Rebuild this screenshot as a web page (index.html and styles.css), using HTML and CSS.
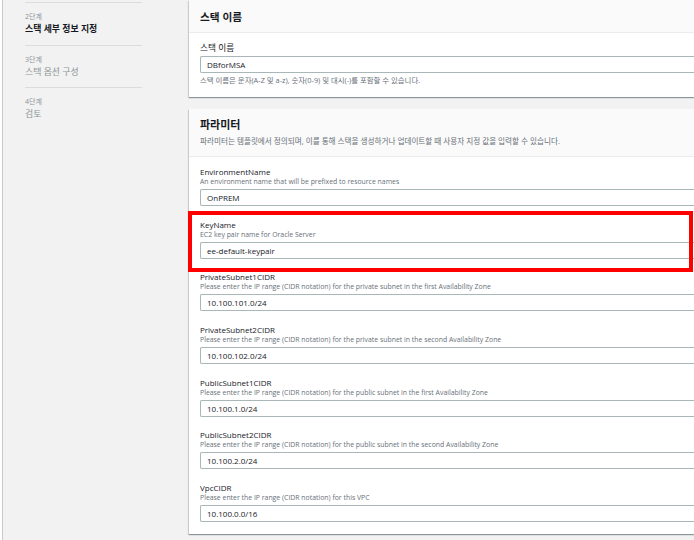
FILE: index.html
```html
<!DOCTYPE html>
<html lang="ko">
<head>
<meta charset="utf-8">
<link rel="stylesheet" href="styles.css">
</head>
<body>
<div class="page">
  <aside class="sidebar">
    <div class="step">
      <div class="step-num">2단계</div>
      <div class="step-title active">스택 세부 정보 지정</div>
    </div>
    <div class="step">
      <div class="step-num">3단계</div>
      <div class="step-title">스택 옵션 구성</div>
    </div>
    <div class="step">
      <div class="step-num">4단계</div>
      <div class="step-title">검토</div>
    </div>
  </aside>
  <main class="main">
    <section class="card">
      <div class="card-header first">
        <h2 class="card-title">스택 이름</h2>
      </div>
      <div class="card-body first-body">
        <div class="label ko">스택 이름</div>
        <div class="input">DBforMSA</div>
        <div class="help">스택 이름은 문자(A-Z 및 a-z), 숫자(0-9) 및 대시(-)를 포함할 수 있습니다.</div>
      </div>
    </section>
    <section class="card params">
      <div class="card-header">
        <h2 class="card-title big">파라미터</h2>
        <div class="card-desc">파라미터는 템플릿에서 정의되며, 이를 통해 스택을 생성하거나 업데이트할 때 사용자 지정 값을 입력할 수 있습니다.</div>
      </div>
      <div class="card-body fields">
        <div class="field">
          <div class="label">EnvironmentName</div>
          <div class="desc">An environment name that will be prefixed to resource names</div>
          <div class="input">OnPREM</div>
        </div>
        <div class="field">
          <div class="label">KeyName</div>
          <div class="desc">EC2 key pair name for Oracle Server</div>
          <div class="input">ee-default-keypair</div>
        </div>
        <div class="field">
          <div class="label">PrivateSubnet1CIDR</div>
          <div class="desc">Please enter the IP range (CIDR notation) for the private subnet in the first Availability Zone</div>
          <div class="input">10.100.101.0/24</div>
        </div>
        <div class="field">
          <div class="label">PrivateSubnet2CIDR</div>
          <div class="desc">Please enter the IP range (CIDR notation) for the private subnet in the second Availability Zone</div>
          <div class="input">10.100.102.0/24</div>
        </div>
        <div class="field">
          <div class="label">PublicSubnet1CIDR</div>
          <div class="desc">Please enter the IP range (CIDR notation) for the public subnet in the first Availability Zone</div>
          <div class="input">10.100.1.0/24</div>
        </div>
        <div class="field">
          <div class="label">PublicSubnet2CIDR</div>
          <div class="desc">Please enter the IP range (CIDR notation) for the public subnet in the second Availability Zone</div>
          <div class="input">10.100.2.0/24</div>
        </div>
        <div class="field">
          <div class="label">VpcCIDR</div>
          <div class="desc">Please enter the IP range (CIDR notation) for this VPC</div>
          <div class="input">10.100.0.0/16</div>
        </div>
      </div>
    </section>
  </main>
</div>
<div class="highlight"></div>
</body>
</html>
```

FILE: styles.css
```css
html, body {
  margin: 0;
  padding: 0;
  background: #ffffff;
}
body {
  width: 694px;
  height: 540px;
  overflow: hidden;
  position: relative;
  font-family: "Open Sans", "Noto Sans CJK KR", sans-serif;
  color: #16191f;
}
.page {
  display: flex;
  height: 540px;
  padding-left: 2px;
}
.sidebar {
  width: 185px;
  flex: none;
  background: #f2f2f2;
  border-left: 1px solid #c9c9c9;
  padding-top: 2px;
}
.step {
  margin-left: 22px;
  width: 117px;
  border-top: 1px solid #dcdcdc;
  padding: 9px 0 9.5px;
}
.step-num {
  font-size: 7px;
  line-height: 10px;
  color: #8a939c;
}
.step-title {
  margin-top: 1px;
  font-size: 8.9px;
  line-height: 12px;
  color: #8d9696;
}
.step-title.active {
  color: #16191f;
  font-weight: 700;
}
.main {
  flex: 1;
  background: #f2f2f2;
  padding-left: 1px;
  min-width: 0;
}
.card {
  background: #ffffff;
  box-shadow: 0 1px 1px 0 rgba(0, 28, 36, 0.35), -1px 1px 1px 0 rgba(0, 28, 36, 0.12);
}
.card.params {
  margin-top: 12px;
}
.card-header {
  background: #fafafa;
  border-bottom: 1px solid #eaeded;
  padding: 9px 0 10px 11px;
}
.card-header.first {
  padding: 10px 0 8px 11px;
}
.card-title {
  margin: 0;
  font-size: 10.7px;
  line-height: 14px;
  font-weight: 700;
  color: #16191f;
}
.card-title.big {
  font-size: 11px;
}
.card-desc {
  margin-top: 4px;
  font-size: 7.6px;
  line-height: 10px;
  color: #687078;
}
.card-body {
  padding: 10px 0 12px 11px;
}
.label {
  font-size: 8px;
  line-height: 10px;
  color: #16191f;
}
.label.ko {
  font-size: 8.7px;
}
.first-body .input {
  margin-top: 3px;
}
.help {
  margin-top: 3px;
  font-size: 7.4px;
  line-height: 9px;
  color: #687078;
}
.desc {
  font-size: 6.9px;
  line-height: 10px;
  color: #687078;
}
.input {
  box-sizing: border-box;
  height: 17px;
  border: 1px solid #aab7b8;
  border-right: none;
  border-radius: 2px 0 0 2px;
  padding-left: 6px;
  font-size: 8px;
  line-height: 15px;
  color: #16191f;
}
.fields {
  display: flex;
  flex-direction: column;
  gap: 13.67px;
}
.field .input {
  margin-top: 2px;
}
.highlight {
  position: absolute;
  left: 188px;
  top: 211px;
  width: 505px;
  height: 61px;
  box-sizing: border-box;
  border: 4px solid #ff0000;
}
```
